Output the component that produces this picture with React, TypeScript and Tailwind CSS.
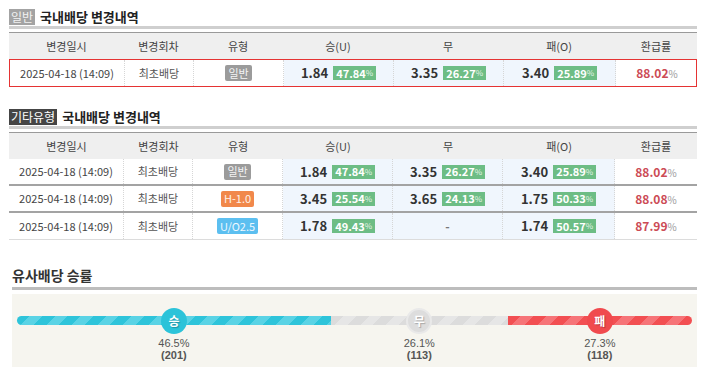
import type { ReactNode } from 'react'

const COLS = 'grid grid-cols-[115px_69px_90px_110px_110px_112px_82px]'

type Row = {
  type: string
  typeClass: string
  win: [string, string]
  draw: [string, string] | null
  lose: [string, string]
  ret: string
}

const generalRow: Row = {
  type: '일반',
  typeClass: 'bg-[#9b9b9b] text-[#f4f4f4]',
  win: ['1.84', '47.84'],
  draw: ['3.35', '26.27'],
  lose: ['3.40', '25.89'],
  ret: '88.02',
}

const otherRows: Row[] = [
  generalRow,
  {
    type: 'H-1.0',
    typeClass: 'bg-[#f1884b] text-[#fff3ea]',
    win: ['3.45', '25.54'],
    draw: ['3.65', '24.13'],
    lose: ['1.75', '50.33'],
    ret: '88.08',
  },
  {
    type: 'U/O2.5',
    typeClass: 'bg-[#5cbff0] text-[#eef8ff]',
    win: ['1.78', '49.43'],
    draw: null,
    lose: ['1.74', '50.57'],
    ret: '87.99',
  },
]

function SectionTitle({ tag, tagClass }: { tag: string; tagClass: string }) {
  return (
    <div className="flex h-[17px] items-center gap-[5px]">
      <span className={`flex h-[16px] items-center px-[2px] text-[12px] leading-none ${tagClass}`}>{tag}</span>
      <span className="text-[13px] font-bold leading-none text-[#222]">국내배당 변경내역</span>
    </div>
  )
}

function HeaderRow() {
  const heads = ['변경일시', '변경회차', '유형', '승(U)', '무', '패(O)', '환급률']
  return (
    <div className={`${COLS} h-[27px] border-t border-[#9a9a9a] bg-[#efefef]`}>
      {heads.map((h) => (
        <div key={h} className="flex items-center justify-center text-[11px] text-[#444]">
          {h}
        </div>
      ))}
    </div>
  )
}

function Cell({ children, blue, last }: { children: ReactNode; blue?: boolean; last?: boolean }) {
  return (
    <div
      className={`flex items-center justify-center ${blue ? 'bg-[#f0f6fd]' : ''} ${
        last ? '' : 'border-r border-dotted border-[#d6d6d6]'
      }`}
    >
      {children}
    </div>
  )
}

function Odds({ v }: { v: [string, string] | null }) {
  if (!v) return <span className="text-[12px] font-bold text-[#777]">-</span>
  return (
    <div className="flex items-center gap-[5px]">
      <span className="text-[13px] font-bold text-[#333]">{v[0]}</span>
      <span className="flex h-[14px] items-center bg-[#6dbd85] px-[3px] text-[11px] font-bold leading-none text-white">
        {v[1]}
        <span className="text-[8px] font-normal text-[#e4f3e8]">%</span>
      </span>
    </div>
  )
}

function DataRow({ row, className }: { row: Row; className: string }) {
  return (
    <div className={`${COLS} ${className}`}>
      <Cell>
        <span className="text-[11px] text-[#444]">2025-04-18 (14:09)</span>
      </Cell>
      <Cell>
        <span className="text-[11px] text-[#555]">최초배당</span>
      </Cell>
      <Cell>
        <span className={`flex h-[16px] items-center rounded-[2px] px-[3px] text-[11px] leading-none ${row.typeClass}`}>
          {row.type}
        </span>
      </Cell>
      <Cell blue>
        <Odds v={row.win} />
      </Cell>
      <Cell blue>
        <Odds v={row.draw} />
      </Cell>
      <Cell blue>
        <Odds v={row.lose} />
      </Cell>
      <Cell last>
        <span className="text-[12px] font-semibold text-[#cc4b55]">
          {row.ret}
          <span className="text-[10px] font-normal text-[#9a9a9a]">%</span>
        </span>
      </Cell>
    </div>
  )
}

type Seg = {
  label: string
  pct: string
  count: number
  width: number
  bar: string
  dot: string
}

const segs: Seg[] = [
  {
    label: '승',
    pct: '46.5%',
    count: 201,
    width: 46.5,
    bar: 'rounded-l-full bg-[repeating-linear-gradient(135deg,#2ec4da_0px,#2ec4da_9px,#5ad3e5_9px,#5ad3e5_18px)]',
    dot: 'bg-[#2cc3d9] text-white',
  },
  {
    label: '무',
    pct: '26.1%',
    count: 113,
    width: 26.2,
    bar: 'bg-[repeating-linear-gradient(135deg,#dcdcdc_0px,#dcdcdc_9px,#e6e6e6_9px,#e6e6e6_18px)]',
    dot: 'bg-[#dddddd] border-2 border-[#e9e9e9] text-white',
  },
  {
    label: '패',
    pct: '27.3%',
    count: 118,
    width: 27.3,
    bar: 'rounded-r-full bg-[repeating-linear-gradient(135deg,#f24f52_0px,#f24f52_9px,#f67478_9px,#f67478_18px)]',
    dot: 'bg-[#f04a4e] text-white',
  },
]

function WinRate() {
  return (
    <div className="ml-[3px] mt-[27px]">
      <div className="h-[17px] text-[14px] font-bold leading-[17px] text-[#333]">유사배당 승률</div>
      <div className="mt-[3px] h-[3px] bg-[#bdbdbd]" />
      <div className="mt-[4px] flex h-[73px] bg-[#f6f5ef] px-[5px] pt-[22px]">
        {segs.map((s) => (
          <div key={s.label} className="flex flex-col items-center" style={{ width: `${s.width}%` }}>
            <div className={`relative h-[9px] w-full ${s.bar}`}>
              <div
                className={`absolute left-1/2 top-1/2 flex h-[26px] w-[26px] -translate-x-1/2 -translate-y-1/2 items-center justify-center rounded-full text-[12px] font-bold [text-shadow:1px_1px_1px_rgba(0,0,0,0.25)] ${s.dot}`}
              >
                {s.label}
              </div>
            </div>
            <div className="mt-[12px] font-['Liberation_Sans',sans-serif] text-[11px] leading-[12px] text-[#555]">
              {s.pct}
            </div>
            <div className="font-['Liberation_Sans',sans-serif] text-[11px] font-bold leading-[12px] text-[#555]">
              ({s.count})
            </div>
          </div>
        ))}
      </div>
    </div>
  )
}

export default function App() {
  return (
    <div className="h-[385px] w-[710px] bg-white pl-[9px] pr-[13px] pt-[8px] font-['Noto_Sans_CJK_KR',sans-serif]">
      <SectionTitle tag="일반" tagClass="bg-[#a3a3a3] text-[#f2f2f2]" />
      <div className="mt-[1px] h-[3px] bg-[#cfcfcf]" />
      <div className="mt-[3px]">
        <HeaderRow />
        <DataRow row={generalRow} className="h-[28px] border border-[#e53333]" />
      </div>

      <div className="mt-[21px]">
        <SectionTitle tag="기타유형" tagClass="bg-[#454545] text-white" />
        <div className="mt-[1px] h-[3px] bg-[#cfcfcf]" />
        <div className="mt-[3px]">
          <HeaderRow />
          {otherRows.map((r, i) => (
            <DataRow
              key={r.type}
              row={r}
              className={
                i < otherRows.length - 1
                  ? 'h-[27px] border-b-2 border-[#a3a3a3]'
                  : 'h-[27px] border-b border-[#dcdcdc]'
              }
            />
          ))}
        </div>
      </div>

      <WinRate />
    </div>
  )
}
